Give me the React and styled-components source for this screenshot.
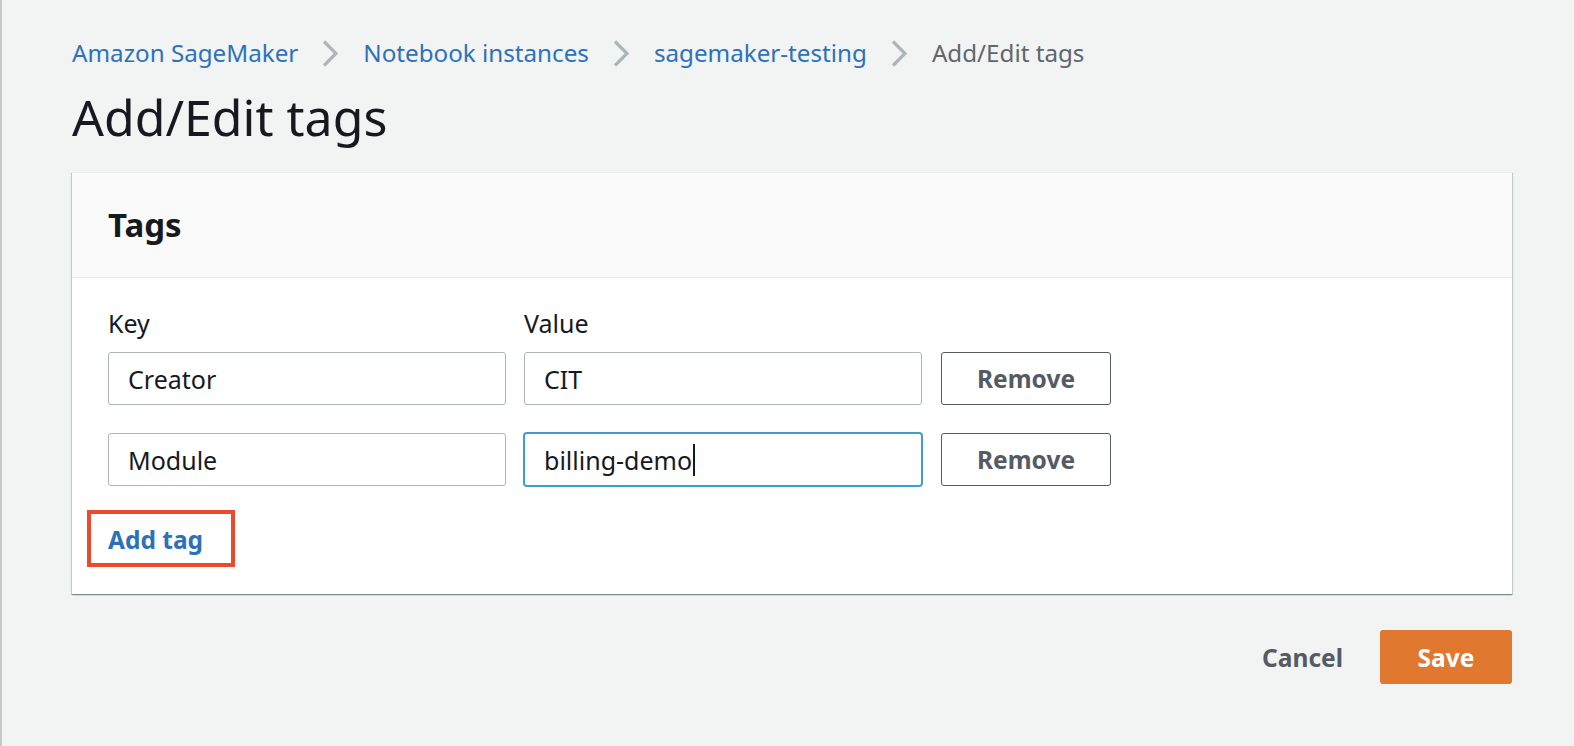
import React from "react";
import styled, { createGlobalStyle } from "styled-components";

const Global = createGlobalStyle`
  html, body { margin: 0; padding: 0; background: #f2f3f3; }
  body { font-family: "Noto Sans", "Open Sans", sans-serif; color: #16191f; }
  * { box-sizing: border-box; }
`;

const Page = styled.div`
  min-height: 746px;
  border-left: 2px solid #c4c8c8;
  padding: 36px 62px 40px 70px;
`;

const Crumbs = styled.nav`
  display: flex;
  align-items: center;
  height: 34px;
  font-size: 24.2px;
  line-height: 34px;
`;

const CrumbLink = styled.a`
  color: #2d72b8;
  text-decoration: none;
`;

const CrumbCurrent = styled.span`
  color: #5f666e;
`;

const Sep = styled.span`
  display: inline-flex;
  width: 16px;
  height: 34px;
  align-items: center;
  margin: 0 25px 0 24px;
`;

const Title = styled.h1`
  margin: 17px 0 0;
  font-size: 50px;
  line-height: 60px;
  font-weight: 400;
  color: #16191f;
`;

const Card = styled.section`
  margin-top: 25px;
  background: #fff;
  border-top: 1px solid #eaeded;
  box-shadow: 0 1px 1px 0 rgba(0, 28, 36, 0.3), 1px 1px 1px 0 rgba(0, 28, 36, 0.15),
    -1px 1px 1px 0 rgba(0, 28, 36, 0.15);
`;

const CardHeader = styled.header`
  background: #fafafa;
  border-bottom: 1px solid #eaeded;
  padding: 32px 36px 32px;
`;

const CardTitle = styled.h2`
  margin: 0;
  font-size: 33px;
  line-height: 40px;
  font-weight: 700;
`;

const CardBody = styled.div`
  padding: 28px 36px 27px;
`;

const TagGrid = styled.div`
  display: grid;
  grid-template-columns: 398px 398px 171px;
  column-gap: 18px;
  row-gap: 28px;
  align-items: center;
`;

const LabelRow = styled.div`
  display: contents;
`;

const Label = styled.div`
  font-size: 25px;
  line-height: 34px;
  margin-bottom: -16px;
  color: #16191f;
`;

const Field = styled.div`
  height: 53px;
  display: flex;
  align-items: center;
  padding: 0 19px;
  border: 1px solid ${(p) => (p.$focused ? "#3f9dcb" : "#aab7b8")};
  box-shadow: ${(p) => (p.$focused ? "0 0 0 1px #3f9dcb" : "none")};
  border-radius: 3px;
  background: #fff;
  font-size: 25px;
  color: #16191f;
`;

const Caret = styled.span`
  display: inline-block;
  width: 2px;
  height: 32px;
  background: #16191f;
  margin-left: 1px;
`;

const RemoveButton = styled.button`
  height: 53px;
  margin-left: 1px;
  border: 1px solid #545b64;
  border-radius: 3px;
  background: #fff;
  color: #545b64;
  font-family: inherit;
  font-size: 24.5px;
  font-weight: 700;
  cursor: pointer;
`;

const Highlight = styled.div`
  margin-top: 24px;
  margin-left: -21px;
  width: 148px;
  border: 4px solid #ec4a2c;
  padding: 9px 0 6px 17px;
`;

const AddTag = styled.a`
  display: block;
  font-size: 24.5px;
  line-height: 34px;
  font-weight: 700;
  color: #2d72b8;
  text-decoration: none;
`;

const Footer = styled.div`
  display: flex;
  justify-content: flex-end;
  align-items: center;
  gap: 17px;
  margin-top: 36px;
`;

const TextButton = styled.button`
  height: 54px;
  padding: 0 20px;
  border: none;
  background: transparent;
  color: #545b64;
  font-family: inherit;
  font-size: 24.5px;
  font-weight: 700;
`;

const PrimaryButton = styled.button`
  width: 132px;
  height: 54px;
  border: none;
  border-radius: 3px;
  background: #e0782f;
  color: #fff;
  font-family: inherit;
  font-size: 24.5px;
  font-weight: 700;
`;

const Chevron = () => (
  <Sep>
    <svg width="16" height="27" viewBox="0 0 16 27" fill="none">
      <path d="M2 1.5 L14 13.5 L2 25.5" stroke="#aab7b8" strokeWidth="3.2" />
    </svg>
  </Sep>
);

const tags = [
  { key: "Creator", value: "CIT" },
  { key: "Module", value: "billing-demo", focused: true },
];

export default function App() {
  return (
    <>
      <Global />
      <Page>
        <Crumbs>
          <CrumbLink href="#">Amazon SageMaker</CrumbLink>
          <Chevron />
          <CrumbLink href="#">Notebook instances</CrumbLink>
          <Chevron />
          <CrumbLink href="#">sagemaker-testing</CrumbLink>
          <Chevron />
          <CrumbCurrent>Add/Edit tags</CrumbCurrent>
        </Crumbs>
        <Title>Add/Edit tags</Title>
        <Card>
          <CardHeader>
            <CardTitle>Tags</CardTitle>
          </CardHeader>
          <CardBody>
            <TagGrid>
              <LabelRow>
                <Label>Key</Label>
                <Label>Value</Label>
                <div />
              </LabelRow>
              {tags.map((t) => (
                <React.Fragment key={t.key}>
                  <Field>{t.key}</Field>
                  <Field $focused={t.focused}>
                    {t.value}
                    {t.focused && <Caret />}
                  </Field>
                  <RemoveButton>Remove</RemoveButton>
                </React.Fragment>
              ))}
            </TagGrid>
            <Highlight>
              <AddTag href="#">Add tag</AddTag>
            </Highlight>
          </CardBody>
        </Card>
        <Footer>
          <TextButton>Cancel</TextButton>
          <PrimaryButton>Save</PrimaryButton>
        </Footer>
      </Page>
    </>
  );
}
